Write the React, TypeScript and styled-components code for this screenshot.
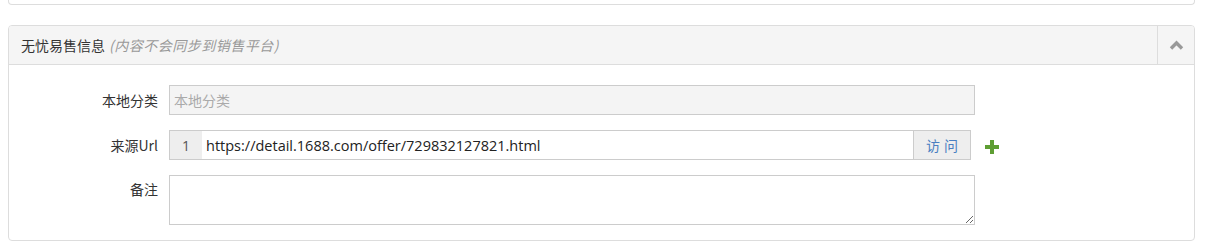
import React from "react";
import styled, { createGlobalStyle } from "styled-components";

const Global = createGlobalStyle`
  body {
    margin: 0;
    background: #fff;
    font-family: "Segoe UI", "Open Sans", "Noto Sans CJK SC", sans-serif;
    font-size: 14px;
    color: #333;
  }
  * { box-sizing: border-box; }
`;

const Page = styled.div`
  padding: 0 10px 0 8px;
  width: 1205px;
`;

const PrevPanel = styled.div`
  height: 5px;
  border: 1px solid #ddd;
  border-top: none;
  border-radius: 0 0 4px 4px;
  margin-bottom: 20px;
`;

const Panel = styled.section`
  border: 1px solid #ddd;
  border-radius: 4px;
  height: 216px;
`;

const Header = styled.div`
  display: flex;
  align-items: stretch;
  height: 39px;
  background: #f5f5f5;
  border-bottom: 1px solid #ddd;
  border-radius: 3px 3px 0 0;
`;

const Title = styled.div`
  flex: 1;
  display: flex;
  align-items: center;
  padding-left: 12px;
  font-family: "Noto Sans CJK SC", sans-serif;
  font-size: 14px;
  color: #333;
`;

const Hint = styled.span`
  font-style: italic;
  color: #999;
  margin-left: 4px;
  letter-spacing: 0.5px;
`;

const Toggle = styled.div`
  width: 37px;
  border-left: 1px solid #ddd;
  display: flex;
  align-items: center;
  justify-content: center;
`;

const Body = styled.div`
  padding: 20px 0 0 0;
  display: flex;
  flex-direction: column;
  gap: 15px;
`;

const Row = styled.div`
  display: flex;
  align-items: flex-start;
`;

const Label = styled.label<{ $top?: number }>`
  width: 160px;
  padding-right: 11px;
  padding-top: ${(p) => p.$top ?? 5}px;
  text-align: right;
  font-family: "Noto Sans CJK SC", sans-serif;
  font-size: 14px;
  color: #333;
`;

const TextInput = styled.input`
  width: 806px;
  height: 30px;
  border: 1px solid #ccc;
  padding: 0 4px;
  font-family: "Noto Sans CJK SC", sans-serif;
  font-size: 14px;
  color: #333;
  background: #fff;
  outline: none;
  &:disabled {
    background: #f4f4f4;
    color: #999;
  }
  &::placeholder {
    color: #aaa;
  }
`;

const Group = styled.div`
  display: flex;
  width: 802px;
  height: 30px;
  border: 1px solid #ccc;
`;

const Addon = styled.span`
  width: 32px;
  display: flex;
  align-items: center;
  justify-content: center;
  background: #eee;
  color: #555;
  font-size: 14px;
`;

const UrlInput = styled.input`
  flex: 1;
  border: none;
  padding: 0 4px;
  font-family: "Segoe UI", "Open Sans", sans-serif;
  font-size: 14.5px;
  color: #222;
  outline: none;
`;

const Visit = styled.button`
  width: 57px;
  border: none;
  border-left: 1px solid #ccc;
  background: #eee;
  color: #4a7fc1;
  font-family: "Noto Sans CJK SC", sans-serif;
  font-size: 14px;
  letter-spacing: 4px;
  padding: 0 0 0 4px;
  cursor: pointer;
`;

const AddBtn = styled.span`
  display: flex;
  align-items: center;
  height: 30px;
  padding-top: 3px;
  margin-left: 13px;
`;

const Note = styled.textarea`
  display: block;
  width: 806px;
  height: 50px;
  margin: 0;
  border: 1px solid #ccc;
  outline: none;
  resize: vertical;
  font-family: "Noto Sans CJK SC", sans-serif;
`;

export default function App() {
  return (
    <Page>
      <Global />
      <PrevPanel />
      <Panel>
        <Header>
          <Title>
            无忧易售信息<Hint>(内容不会同步到销售平台)</Hint>
          </Title>
          <Toggle>
            <svg width="15" height="10" viewBox="0 0 15 10">
              <path d="M2 8.5 L7.5 3 L13 8.5" fill="none" stroke="#999" strokeWidth="3.4" />
            </svg>
          </Toggle>
        </Header>
        <Body>
          <Row>
            <Label>本地分类</Label>
            <TextInput disabled placeholder="本地分类" />
          </Row>
          <Row>
            <Label>来源Url</Label>
            <Group>
              <Addon>1</Addon>
              <UrlInput defaultValue="https://detail.1688.com/offer/729832127821.html" />
              <Visit>访问</Visit>
            </Group>
            <AddBtn>
              <svg width="16" height="16" viewBox="0 0 16 16">
                <path d="M6 1 H10 V6 H15 V10 H10 V15 H6 V10 H1 V6 H6 Z" fill="#5e9e33" />
              </svg>
            </AddBtn>
          </Row>
          <Row>
            <Label $top={4}>备注</Label>
            <Note />
          </Row>
        </Body>
      </Panel>
    </Page>
  );
}
